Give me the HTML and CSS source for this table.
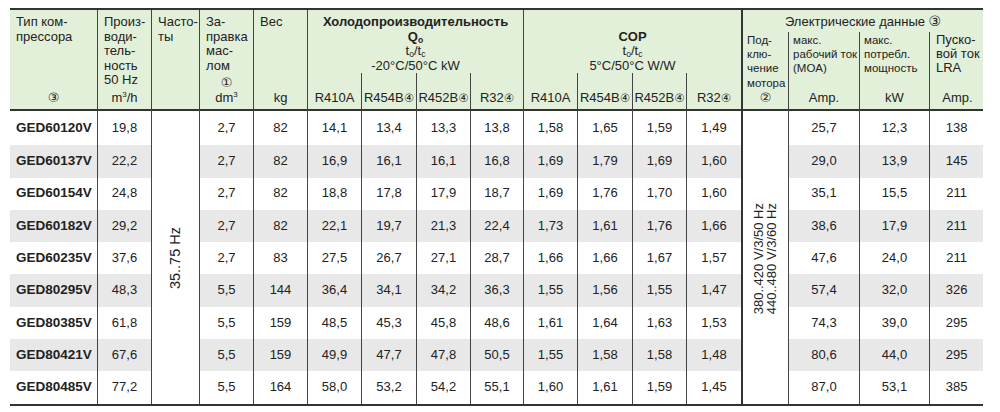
FILE: index.html
```html
<!DOCTYPE html>
<html lang="ru">
<head>
<meta charset="utf-8">
<title>GED compressors</title>
<link rel="stylesheet" href="styles.css">
</head>
<body>
<table class="spec">
  <colgroup>
    <col class="w87"><col class="w54"><col class="w48"><col class="w54"><col class="w54">
    <col class="w54"><col class="w55"><col class="w54"><col class="w53">
    <col class="w54"><col class="w55"><col class="w54"><col class="w55">
    <col class="w47"><col class="w71"><col class="w70"><col class="w54">
  </colgroup>
  <thead>
    <tr class="ra">
      <th rowspan="3" class="first"><div class="hd"><span>Тип ком-<br>прессора</span><span class="unit"><span class="cn">③</span></span></div></th>
      <th rowspan="3"><div class="hd"><span>Произ-<br>води-<br>тель-<br>ность<br>50 Hz</span><span class="unit">m<sup>3</sup>/h</span></div></th>
      <th rowspan="3"><div class="hd"><span>Часто-<br>ты</span></div></th>
      <th rowspan="3"><div class="hd"><span>За-<br>правка<br>мас-<br>лом</span><span class="unit"><span class="cn">①</span><br>dm<sup>3</sup></span></div></th>
      <th rowspan="3"><div class="hd"><span>Вес</span><span class="unit">kg</span></div></th>
      <th colspan="4" rowspan="2" class="grp"><b>Холодопроизводительность</b><br><b>Q<sub>o</sub></b><br>t<sub>o</sub>/t<sub>c</sub><br>-20°C/50°C kW</th>
      <th colspan="4" rowspan="2" class="grp">&nbsp;<br><b>COP</b><br>t<sub>o</sub>/t<sub>c</sub><br>5°C/50°C W/W</th>
      <th colspan="4" class="egrp motor">Электрические данные <span class="cn big">③</span></th>
    </tr>
    <tr class="rb">
      <th rowspan="2" class="motor"><div class="hd e sm"><span>Под-<br>клю-<br>чение<br>мотора</span><span class="unit"><span class="cn">②</span></span></div></th>
      <th rowspan="2"><div class="hd e sm"><span>макс.<br>рабочий ток<br>(MOA)</span><span class="unit">Amp.</span></div></th>
      <th rowspan="2"><div class="hd e sm"><span>макс.<br>потребл.<br>мощность</span><span class="unit">kW</span></div></th>
      <th rowspan="2"><div class="hd e lg"><span>Пуско-<br>вой ток<br>LRA</span><span class="unit">Amp.</span></div></th>
    </tr>
    <tr class="rc">
      <th class="sub">R410A</th>
      <th class="sub">R454B<span class="cn">④</span></th>
      <th class="sub">R452B<span class="cn">④</span></th>
      <th class="sub">R32<span class="cn">④</span></th>
      <th class="sub">R410A</th>
      <th class="sub">R454B<span class="cn">④</span></th>
      <th class="sub">R452B<span class="cn">④</span></th>
      <th class="sub">R32<span class="cn">④</span></th>
    </tr>
  </thead>
  <tbody>
    <tr class="top">
      <td class="first type">GED60120V</td><td>19,8</td>
      <td rowspan="9" class="rot"><span class="vt one">35..75 Hz</span></td>
      <td>2,7</td><td>82</td>
      <td>14,1</td><td>13,4</td><td>13,3</td><td>13,8</td>
      <td>1,58</td><td>1,65</td><td>1,59</td><td>1,49</td>
      <td rowspan="9" class="rot motor"><span class="vt two">380..420 V/3/50 Hz<br>440..480 V/3/60 Hz</span></td>
      <td>25,7</td><td>12,3</td><td>138</td>
    </tr>
    <tr class="alt">
      <td class="first type">GED60137V</td><td>22,2</td><td>2,7</td><td>82</td>
      <td>16,9</td><td>16,1</td><td>16,1</td><td>16,8</td>
      <td>1,69</td><td>1,79</td><td>1,69</td><td>1,60</td>
      <td>29,0</td><td>13,9</td><td>145</td>
    </tr>
    <tr>
      <td class="first type">GED60154V</td><td>24,8</td><td>2,7</td><td>82</td>
      <td>18,8</td><td>17,8</td><td>17,9</td><td>18,7</td>
      <td>1,69</td><td>1,76</td><td>1,70</td><td>1,60</td>
      <td>35,1</td><td>15,5</td><td>211</td>
    </tr>
    <tr class="alt">
      <td class="first type">GED60182V</td><td>29,2</td><td>2,7</td><td>82</td>
      <td>22,1</td><td>19,7</td><td>21,3</td><td>22,4</td>
      <td>1,73</td><td>1,61</td><td>1,76</td><td>1,66</td>
      <td>38,6</td><td>17,9</td><td>211</td>
    </tr>
    <tr>
      <td class="first type">GED60235V</td><td>37,6</td><td>2,7</td><td>83</td>
      <td>27,5</td><td>26,7</td><td>27,1</td><td>28,7</td>
      <td>1,66</td><td>1,66</td><td>1,67</td><td>1,57</td>
      <td>47,6</td><td>24,0</td><td>211</td>
    </tr>
    <tr class="alt">
      <td class="first type">GED80295V</td><td>48,3</td><td>5,5</td><td>144</td>
      <td>36,4</td><td>34,1</td><td>34,2</td><td>36,3</td>
      <td>1,55</td><td>1,56</td><td>1,55</td><td>1,47</td>
      <td>57,4</td><td>32,0</td><td>326</td>
    </tr>
    <tr>
      <td class="first type">GED80385V</td><td>61,8</td><td>5,5</td><td>159</td>
      <td>48,5</td><td>45,3</td><td>45,8</td><td>48,6</td>
      <td>1,61</td><td>1,64</td><td>1,63</td><td>1,53</td>
      <td>74,3</td><td>39,0</td><td>295</td>
    </tr>
    <tr class="alt">
      <td class="first type">GED80421V</td><td>67,6</td><td>5,5</td><td>159</td>
      <td>49,9</td><td>47,7</td><td>47,8</td><td>50,5</td>
      <td>1,55</td><td>1,58</td><td>1,58</td><td>1,48</td>
      <td>80,6</td><td>44,0</td><td>295</td>
    </tr>
    <tr>
      <td class="first type">GED80485V</td><td>77,2</td><td>5,5</td><td>164</td>
      <td>58,0</td><td>53,2</td><td>54,2</td><td>55,1</td>
      <td>1,60</td><td>1,61</td><td>1,59</td><td>1,45</td>
      <td>87,0</td><td>53,1</td><td>385</td>
    </tr>
  </tbody>
</table>
</body>
</html>
```
FILE: styles.css
```css
html, body {
  background: #ffffff;
}
body {
  margin: 8px 0 0 10px;
}
.spec {
  border-collapse: separate;
  border-spacing: 0;
  table-layout: fixed;
  width: 973px;
  border-top: 2px solid #333333;
  border-bottom: 2px solid #333333;
  font-family: "Liberation Sans", Arial, sans-serif;
  font-size: 13px;
  line-height: 14.5px;
  color: #222222;
}
.w87 { width: 87px; }
.w54 { width: 54px; }
.w48 { width: 48px; }
.w55 { width: 55px; }
.w53 { width: 53px; }
.w47 { width: 47px; }
.w71 { width: 71px; }
.w70 { width: 70px; }

.spec th,
.spec td {
  padding: 0;
  border-left: 1px solid #444444;
}
.spec .first {
  border-left: none;
}
.spec .motor {
  border-left: 2px solid #333333;
}
.spec th {
  background: #e2f0da;
  font-weight: normal;
  text-align: left;
  vertical-align: top;
}
.ra { height: 22px; }
.rb { height: 41px; }
.rc { height: 36px; }

.hd {
  display: flex;
  flex-direction: column;
  justify-content: space-between;
  box-sizing: border-box;
  height: 99px;
  padding: 5px 2px 4px 6px;
}
.hd .unit {
  text-align: center;
  margin-left: -4px;
}
.hd.e {
  height: 77px;
  padding: 1px 1px 4px 4px;
  line-height: 14.2px;
}
.hd.sm > span:first-child {
  font-size: 11.5px;
}
.hd.e .unit {
  margin-left: -3px;
}
.hd.lg {
  padding-left: 6px;
}
.spec sup {
  font-size: 8px;
  line-height: 0;
  vertical-align: 5px;
}
.spec sub {
  font-size: 8.5px;
  line-height: 0;
  vertical-align: -2px;
}
.cn {
  font-family: "DejaVu Sans", sans-serif;
  font-size: 13px;
  line-height: 0;
}
.cn.big {
  font-size: 14px;
}
.spec th.sub .cn {
  font-size: 11.5px;
}
.spec th.grp {
  text-align: center;
  padding-top: 5px;
}
.spec th.grp b {
  font-weight: bold;
}
.spec th.egrp {
  text-align: center;
  vertical-align: middle;
  padding-top: 2px;
}
.spec th.sub {
  text-align: center;
  vertical-align: bottom;
  padding-bottom: 4px;
  white-space: nowrap;
}

.spec td {
  text-align: center;
  vertical-align: middle;
  height: 32.3px;
  background: #ffffff;
}
.spec tr.top td {
  border-top: 2px solid #333333;
  height: 34.3px;
}
.spec tr.alt td {
  background: #e8e8e8;
}
.spec td.type {
  text-align: left;
  padding-left: 6px;
  font-weight: bold;
  font-size: 13.5px;
}
.spec td.rot {
  background: #ffffff;
  padding-top: 2px;
}
.vt {
  display: inline-block;
  vertical-align: middle;
  writing-mode: vertical-rl;
  transform: rotate(180deg);
  white-space: nowrap;
}
.vt.one {
  font-size: 14.5px;
}
.vt.two {
  line-height: 12.5px;
}
```
